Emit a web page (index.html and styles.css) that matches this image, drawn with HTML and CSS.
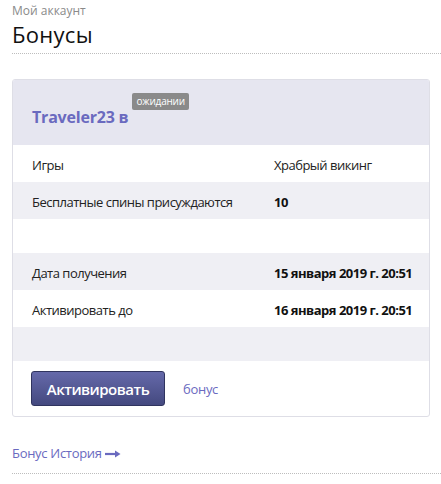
FILE: index.html
```html
<!DOCTYPE html>
<html lang="ru">
<head>
<meta charset="utf-8">
<link rel="stylesheet" href="styles.css">
</head>
<body>
<div class="page">
  <div class="head">
    <div class="crumb">Мой аккаунт</div>
    <h1 class="title">Бонусы</h1>
  </div>
  <div class="card">
    <div class="card-head">
      <span class="name">Traveler23 в</span><span class="badge">ожидании</span>
    </div>
    <div class="row"><span class="label">Игры</span><span class="value">Храбрый викинг</span></div>
    <div class="row alt"><span class="label">Бесплатные спины присуждаются</span><span class="value strong">10</span></div>
    <div class="row empty"></div>
    <div class="row alt"><span class="label">Дата получения</span><span class="value strong">15 января 2019 г. 20:51</span></div>
    <div class="row"><span class="label">Активировать до</span><span class="value strong">16 января 2019 г. 20:51</span></div>
    <div class="row alt empty"></div>
    <div class="card-foot">
      <button class="btn">Активировать</button>
      <a class="link" href="#">бонус</a>
    </div>
  </div>
  <div class="history">
    <a class="link hist" href="#">Бонус История <svg class="arrow" width="16" height="8" viewBox="0 0 16 8"><path d="M0 4H12" stroke="currentColor" stroke-width="2.2"/><path d="M10 0.5L15.5 4L10 7.5Z" fill="currentColor"/></svg></a>
  </div>
</div>
</body>
</html>
```

FILE: styles.css
```css
html, body {
  margin: 0;
  padding: 0;
  background: #fff;
}
body {
  font-family: "Open Sans", "Liberation Sans", sans-serif;
  color: #222;
}
.page {
  padding-left: 12px;
}
.head {
  padding-top: 2px;
  border-bottom: 1px dotted #bdbdbd;
  height: 51px;
  box-sizing: content-box;
}
.crumb {
  font-size: 12px;
  line-height: 17px;
  color: #8a8a8a;
}
.title {
  margin: 3px 0 0;
  font-weight: 400;
  font-size: 22px;
  line-height: 24px;
  color: #111;
  letter-spacing: 0.3px;
}
.card {
  margin-top: 25px;
  margin-right: 11px;
  border: 1px solid #dedee6;
  border-radius: 3px;
  overflow: hidden;
}
.card-head {
  background: #e6e6f0;
  height: 65px;
  box-sizing: border-box;
  padding: 12px 0 0 19px;
  display: flex;
  align-items: flex-start;
}
.name {
  font-weight: 700;
  font-size: 16px;
  letter-spacing: -0.2px;
  color: #6a6abf;
  margin-top: 14px;
  line-height: 22px;
}
.badge {
  margin-left: 4px;
  margin-top: 1px;
  background: #8a8a8a;
  color: #fff;
  font-size: 10px;
  letter-spacing: -0.2px;
  line-height: 17px;
  padding: 0 4px;
  border-radius: 2px;
}
.row {
  display: flex;
  height: 37px;
  align-items: center;
  font-size: 13px;
  letter-spacing: -0.5px;
  padding-left: 19px;
  padding-top: 2px;
  box-sizing: border-box;
}
.row.alt {
  background: #efeff4;
}
.row.empty {
  height: 34px;
}
.label {
  width: 242px;
  color: #222;
}
.value {
  color: #222;
}
.value.strong {
  font-weight: 700;
  color: #111;
}
.card-foot {
  height: 55px;
  display: flex;
  align-items: center;
  padding-left: 18px;
}
.btn {
  width: 134px;
  height: 35px;
  font-family: inherit;
  font-weight: 600;
  font-size: 15px;
  letter-spacing: -0.5px;
  color: #fff;
  background: linear-gradient(#6569aa, #44497f);
  border: 1px solid #30345f;
  border-radius: 3px;
  padding: 0;
}
.link {
  color: #6a6abf;
  text-decoration: none;
  font-size: 13px;
  letter-spacing: -0.3px;
}
.card-foot .link {
  margin-left: 18px;
}
.history {
  margin-top: 24px;
  border-bottom: 1px dotted #bdbdbd;
  height: 32px;
}
.hist {
  font-size: 13px;
  line-height: 20px;
  display: inline-flex;
  align-items: center;
  gap: 3px;
}
.arrow {
  margin-top: 1px;
}
```
